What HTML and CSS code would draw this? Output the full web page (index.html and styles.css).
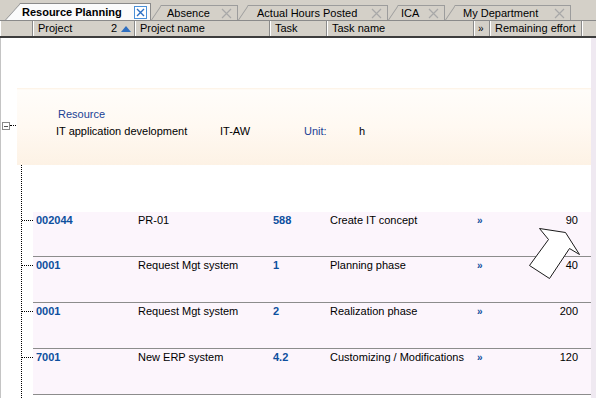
FILE: index.html
```html
<!DOCTYPE html>
<html>
  <head>
    <link rel="stylesheet" href="styles.css">
  </head>
  <body>
    <div class="tabbar">
      <div class="tab tab-active">
        <span class="tab-label">Resource Planning</span>
        <svg class="tab-close-active" width="13" height="13" viewBox="0 0 13 13">
          <rect x="0.5" y="0.5" width="12" height="12" fill="#fff" stroke="#4a90d8"/>
          <path d="M3 3 L10 10 M10 3 L3 10" stroke="#2a6fc4" stroke-width="1.4"/>
        </svg>
      </div>
      <div class="tab tab-absence">
        <span class="tab-label">Absence</span>
        <svg class="tab-close" width="11" height="11" viewBox="0 0 11 11"><path d="M1 1 L10 10 M10 1 L1 10" stroke="#a8a8a8" stroke-width="1.2"/></svg>
      </div>
      <div class="tab tab-hours">
        <span class="tab-label">Actual Hours Posted</span>
        <svg class="tab-close" width="11" height="11" viewBox="0 0 11 11"><path d="M1 1 L10 10 M10 1 L1 10" stroke="#a8a8a8" stroke-width="1.2"/></svg>
      </div>
      <div class="tab tab-ica">
        <span class="tab-label">ICA</span>
        <svg class="tab-close" width="11" height="11" viewBox="0 0 11 11"><path d="M1 1 L10 10 M10 1 L1 10" stroke="#a8a8a8" stroke-width="1.2"/></svg>
      </div>
      <div class="tab tab-dept">
        <span class="tab-label">My Department</span>
        <svg class="tab-close" width="11" height="11" viewBox="0 0 11 11"><path d="M1 1 L10 10 M10 1 L1 10" stroke="#a8a8a8" stroke-width="1.2"/></svg>
      </div>
    </div>

    <div class="header">
      <div class="hcell hcell-gutter"></div>
      <div class="hcell hcell-project">Project <span class="sort">2<svg width="10" height="6" viewBox="0 0 10 6"><path d="M0 6 L5 0 L10 6 Z" fill="#2f6fc0"/></svg></span></div>
      <div class="hcell">Project name</div>
      <div class="hcell">Task</div>
      <div class="hcell">Task name</div>
      <div class="hcell hcell-more">&raquo;</div>
      <div class="hcell">Remaining effort</div>
      <div class="hcell hcell-rest"></div>
    </div>

    <div class="content">
      <div class="main">
        <div class="group">
          <div class="expander">
            <span class="expander-box"></span>
            <span class="expander-stub"></span>
          </div>
          <div class="band">
            <div class="band-title">Resource</div>
            <div class="band-line">
              <span class="band-name">IT application development</span>
              <span class="band-code">IT-AW</span>
              <span class="band-unit">Unit:</span>
              <span>h</span>
            </div>
          </div>
        </div>

        <div class="children">
          <div class="row">
            <span class="conn"></span>
            <div class="cells">
              <span class="id">002044</span>
              <span>PR-01</span>
              <span class="id">588</span>
              <span>Create IT concept</span>
              <span class="more">&raquo;</span>
              <span class="num">90</span>
            </div>
          </div>
          <div class="row">
            <span class="conn"></span>
            <div class="cells">
              <span class="id">0001</span>
              <span>Request Mgt system</span>
              <span class="id">1</span>
              <span>Planning phase</span>
              <span class="more">&raquo;</span>
              <span class="num">40</span>
            </div>
          </div>
          <div class="row">
            <span class="conn"></span>
            <div class="cells">
              <span class="id">0001</span>
              <span>Request Mgt system</span>
              <span class="id">2</span>
              <span>Realization phase</span>
              <span class="more">&raquo;</span>
              <span class="num">200</span>
            </div>
          </div>
          <div class="row">
            <span class="conn"></span>
            <div class="cells">
              <span class="id">7001</span>
              <span>New ERP system</span>
              <span class="id">4.2</span>
              <span>Customizing / Modifications</span>
              <span class="more">&raquo;</span>
              <span class="num">120</span>
            </div>
          </div>
        </div>
      </div>
      <div class="strip"></div>
    </div>

    <!-- callout arrow over the grid -->
    <svg class="callout" width="596" height="398" viewBox="0 0 596 398">
      <polygon points="539.5,228.5 565.5,232.5 579.5,254.5 569.5,248.5 549.5,278.5 529.5,265.5 548.5,239.5" fill="#fff" stroke="#1a1a1a" stroke-width="1"/>
    </svg>
  </body>
</html>
```

FILE: styles.css
```css
/* grid page */
body {
  margin: 0;
  width: 596px;
  height: 398px;
  overflow: hidden;
  position: relative;
  background: #fff;
  font-family: "Liberation Sans", Arial, sans-serif;
  font-size: 11px;
  line-height: 13px;
  color: #000;
}

/* tabs */
.tabbar {
  position: relative;
  z-index: 0;
  display: flex;
  align-items: flex-end;
  height: 20px;
  padding-left: 20px;
  background: #d4d0c8;
  border-bottom: 1px solid #8a8a8a;
}

.tab {
  position: relative;
  display: flex;
  align-items: center;
  height: 15px;
  padding: 0 5px 0 6px;
  margin-left: 10px;
  background: #d4d0c8;
  border-top: 1px solid #9c9c9c;
  border-right: 1px solid #9c9c9c;
  box-sizing: border-box;
}

.tab::before {
  content: "";
  position: absolute;
  z-index: -1;
  left: -10px;
  top: -1px;
  bottom: 0;
  width: 14px;
  background: #d4d0c8;
  border-left: 1px solid #9c9c9c;
  border-top: 1px solid #9c9c9c;
  transform: skewX(-34deg);
  transform-origin: bottom left;
}

.tab-active {
  height: 17px;
  margin-left: 0;
  padding-left: 2px;
  padding-right: 3px;
  width: 131px;
  background: #fbfbfb;
  border-color: #8a8a8a;
  font-weight: bold;
}

.tab-active::before {
  left: -15px;
  width: 20px;
  background: #fbfbfb;
  border-color: #8a8a8a;
  transform: skewX(-42deg);
}

.tab-absence { width: 77px; }
.tab-hours { width: 140px; padding-left: 9px; }
.tab-ica { width: 47px; padding-left: 3px; }
.tab-dept { width: 116px; padding-left: 8px; }

.tab-label {
  white-space: nowrap;
}

.tab-close,
.tab-close-active {
  margin-left: auto;
}

/* column header */
.header {
  display: grid;
  grid-template-columns: 33px 102px 135px 57px 147px 16px 92px 1fr;
  height: 15px;
  background: #d4d0c8;
  border-bottom: 2px solid #3c3c3c;
}

.hcell {
  display: flex;
  align-items: center;
  padding-left: 5px;
  border-right: 1px solid #8a8a8a;
  box-shadow: inset 1px 0 #fff;
  white-space: nowrap;
  overflow: hidden;
}

.hcell-gutter { padding: 0; }
.hcell-rest { border-right: none; }
.hcell-more { padding-left: 4px; font-size: 10px; }

.hcell-project {
  justify-content: space-between;
  padding-right: 3px;
}

.sort {
  display: flex;
  align-items: center;
  gap: 4px;
}

/* body */
.content {
  display: flex;
  height: 360px;
}

.main {
  flex: 1;
  padding-top: 50px;
  border-left: 1px solid #c4c4c4;
}

.strip {
  width: 5px;
  background: #efe9f1;
}

.group {
  display: flex;
  height: 77px;
}

.expander {
  display: flex;
  align-items: flex-start;
  width: 15px;
  padding: 34px 0 0 1px;
}

.expander-box {
  width: 8px;
  height: 8px;
  box-sizing: border-box;
  border: 1px solid #8a8a8a;
  background: linear-gradient(#555, #555) center / 4px 1px no-repeat, #fff;
}

.expander-stub {
  width: 6px;
  margin-top: 3px;
  border-top: 1px dotted #000;
}

.band {
  flex: 1;
  padding: 20px 0 0 41px;
  background: linear-gradient(#fdf1e2 0, #fffdfa 2px, #fff9f2 50%, #fdf2e5 100%);
}

.band-title {
  color: #1a3f94;
}

.band-line {
  display: flex;
  margin: 4px 0 0 -2px;
}

.band-name { width: 164px; }
.band-code { width: 84px; }
.band-unit { width: 55px; color: #1a3f94; }

.children {
  margin-left: 20px;
  padding-top: 47px;
  border-left: 1px dotted #000;
  height: 186px;
}

.row {
  display: flex;
  align-items: flex-start;
}

.conn {
  width: 11px;
  margin-top: 8px;
  border-top: 1px dotted #000;
}

.cells {
  flex: 1;
  display: grid;
  grid-template-columns: 102px 135px 57px 147px 16px 92px 1fr;
  height: 45px;
  padding-top: 2px;
  box-sizing: border-box;
  background: #fcf5fc;
  border-bottom: 1px solid #8c8c8c;
}

.row + .row .cells {
  height: 46px;
}

.cells > span {
  padding-left: 3px;
  white-space: nowrap;
}

.id {
  color: #0d4f9e;
  font-weight: bold;
}

.more {
  color: #0d4f9e;
  font-weight: bold;
  font-size: 10px;
}

.cells > .num {
  text-align: right;
  padding-right: 4px;
}

/* callout arrow */
.callout {
  position: absolute;
  left: 0;
  top: 0;
  pointer-events: none;
}
```
